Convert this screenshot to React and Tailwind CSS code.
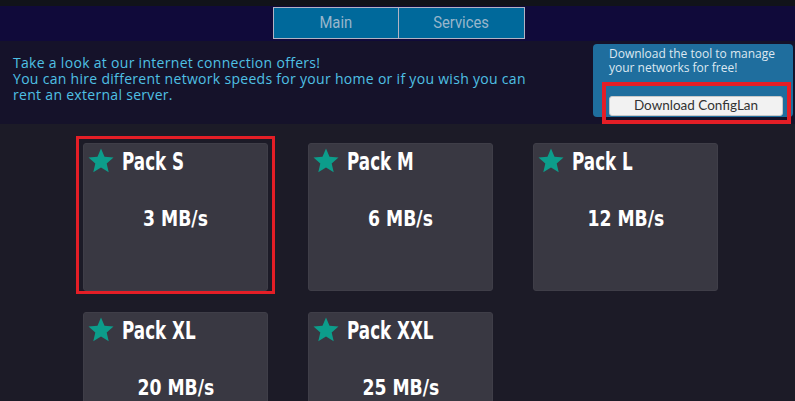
import React from 'react';

const packs = [
  { name: 'Pack S', speed: '3 MB/s', selected: true },
  { name: 'Pack M', speed: '6 MB/s' },
  { name: 'Pack L', speed: '12 MB/s' },
  { name: 'Pack XL', speed: '20 MB/s' },
  { name: 'Pack XXL', speed: '25 MB/s' },
];

function Star() {
  return (
    <svg viewBox="0 0 24 24" className="w-[30px] h-[30px] shrink-0" fill="#0c9d8b">
      <path d="M12 17.27L18.18 21l-1.64-7.03L22 9.24l-7.19-.61L12 2 9.19 8.63 2 9.24l5.46 4.73L5.82 21z" />
    </svg>
  );
}

function PackCard({ pack }) {
  return (
    <div className="relative h-[148px] rounded-[3px] bg-[#393842] border border-[#3f3e48]">
      {pack.selected && (
        <span className="absolute -left-[8px] -top-[8px] -right-[8px] -bottom-[4px] border-3 border-[#e41e26] pointer-events-none" />
      )}
      <div className="flex items-center pl-[2px] pt-[2px]">
        <Star />
        <span className="inline-block ml-[6px] origin-left scale-x-[0.67] text-[25px] leading-none font-bold text-white font-['DejaVu_Sans',sans-serif] whitespace-nowrap">
          {pack.name}
        </span>
      </div>
      <div className="mt-[33px] flex justify-center">
        <span className="inline-block scale-x-[0.82] text-[21px] leading-none font-bold text-white font-['DejaVu_Sans',sans-serif] whitespace-nowrap">
          {pack.speed}
        </span>
      </div>
    </div>
  );
}

export default function App() {
  return (
    <div className="min-h-screen bg-[#1c1b27] font-['Open_Sans',sans-serif]">
      <div className="h-[6px] bg-[#111319]" />

      {/* Top navigation */}
      <nav className="h-[35px] bg-[#100a3a] flex justify-center">
        <div className="mt-px flex h-[32px] border border-[#b3b3c3] bg-[#00699b] ml-[2px]">
          <div className="w-[125px] border-r border-[#b3b3c3] flex items-center justify-center">
            <span className="inline-block scale-x-[0.87] text-[17px] text-[#98b6cb] font-['Roboto',sans-serif]">
              Main
            </span>
          </div>
          <div className="w-[125px] flex items-center justify-center">
            <span className="inline-block scale-x-[0.87] text-[17px] text-[#98b6cb] font-['Roboto',sans-serif]">
              Services
            </span>
          </div>
        </div>
      </nav>

      {/* Info bar */}
      <section className="h-[83px] bg-[#15122a] flex justify-between">
        <p className="pl-[13px] pt-[14px] text-[14px] leading-[16px] tracking-[0.3px] text-[#4fc0e4]">
          Take a look at our internet connection offers!
          <br />
          You can hire different network speeds for your home or if you wish you can
          <br />
          rent an external server.
        </p>
        <div className="w-[200px] h-[73px] mt-[3px] mr-[2px] bg-[#1f6e9e] rounded-[4px] pl-[16px] pt-[3px]">
          <p className="text-[12px] leading-[14px] text-[#dde8f1] whitespace-nowrap">
            Download the tool to manage
            <br />
            your networks for free!
          </p>
          <div className="relative mt-[17px] w-[174px]">
            <span className="absolute -left-[7px] -top-[10px] -right-[8px] -bottom-[8px] border-4 border-[#e41e26] pointer-events-none" />
            <button className="relative w-[174px] h-[20px] rounded-[3px] bg-[#f2f2f2] border border-[#c8c8c8] text-[13.5px] leading-none text-[#333] font-['Lato',sans-serif]">
              Download ConfigLan
            </button>
          </div>
        </div>
      </section>

      {/* Packs */}
      <div className="pt-[19px] pl-[83px] grid grid-cols-[185px_185px_185px] gap-x-[40px] gap-y-[21px]">
        {packs.map((p) => (
          <PackCard key={p.name} pack={p} />
        ))}
      </div>
    </div>
  );
}
